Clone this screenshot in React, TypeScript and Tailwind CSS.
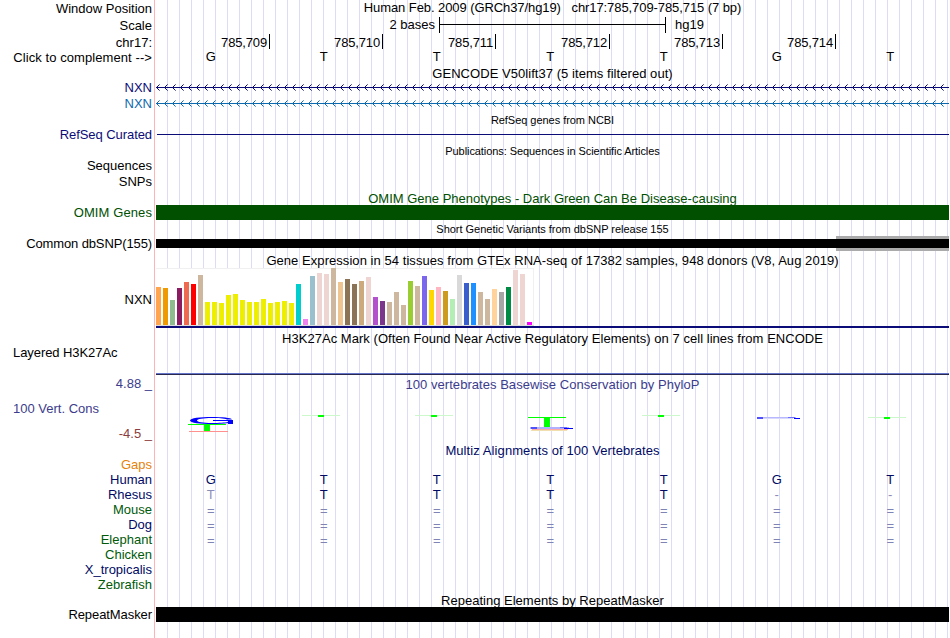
import React from "react";
import clsx from "clsx";

const labels = [
  { text: "Window Position", className: "mt-px" },
  { text: "Scale", className: "mt-0.5" },
  { text: "chr17:", className: "mt-0.5" },
  { text: "Click to complement -->", className: "tracking-[0.08px]" },
  { text: "NXN", className: "mt-[15px] text-[#0c0c78]" },
  { text: "NXN", className: "mt-px text-[#0e6aae]" },
  {
    text: "RefSeq Curated",
    className: "mt-4 tracking-[-0.07px] text-[#0c0c78]",
  },
  { text: "Sequences", className: "mt-4" },
  { text: "SNPs", className: "mt-px" },
  { text: "OMIM Genes", className: "mt-4 tracking-[0.1px] text-[#005000]" },
  { text: "Common dbSNP(155)", className: "mt-4 tracking-[-0.12px]" },
  { text: "NXN", className: "mt-[41px]" },
  {
    text: "Layered H3K27Ac",
    className: "mt-[38px] self-start ml-[13px] tracking-[-0.07px]",
  },
  { text: "4.88 _", className: "mt-4 text-[#3c3c8c]" },
  {
    text: "100 Vert. Cons",
    className: "mt-2.5 self-start ml-[13px] text-[#3c3c8c]",
  },
  { text: "-4.5 _", className: "mt-2.5 text-[#8c3c3c]" },
  { text: "Gaps", className: "mt-4 text-[#e6820a]" },
  { text: "Human", className: "text-[#000a64]" },
  { text: "Rhesus", className: "text-[#000a64]" },
  { text: "Mouse", className: "text-[#005a0a]" },
  { text: "Dog", className: "text-[#000a64]" },
  { text: "Elephant", className: "text-[#005a0a]" },
  { text: "Chicken", className: "text-[#005a0a]" },
  { text: "X_tropicalis", className: "text-[#000a64]" },
  { text: "Zebrafish", className: "text-[#005a0a]" },
  { text: "RepeatMasker", className: "mt-[15px] tracking-[-0.08px]" },
];

const positions = [
  "785,709",
  "785,710",
  "785,711",
  "785,712",
  "785,713",
  "785,714",
];

const alignments = ["GTTTTGT", "TTTTT--", "=======", "=======", "======="];

// [height, color] for each GTEx tissue
const tissues: [number, string][] = [
  [38, "#ffa54f"],
  [37, "#ee9a00"],
  [25, "#8fbc8f"],
  [37, "#8b1c62"],
  [43, "#ee6a50"],
  [41, "#ff0000"],
  [50, "#cdb79e"],
  [23, "#eeee00"],
  [23, "#eeee00"],
  [22, "#eeee00"],
  [30, "#eeee00"],
  [31, "#eeee00"],
  [25, "#eeee00"],
  [23, "#eeee00"],
  [23, "#eeee00"],
  [26, "#eeee00"],
  [22, "#eeee00"],
  [23, "#eeee00"],
  [24, "#eeee00"],
  [22, "#eeee00"],
  [41, "#00cdcd"],
  [6, "#ee82ee"],
  [49, "#9ac0cd"],
  [52, "#eed5d2"],
  [51, "#eed5d2"],
  [57, "#cdb79e"],
  [43, "#eec591"],
  [46, "#8b7355"],
  [41, "#8b7355"],
  [44, "#cdaa7d"],
  [48, "#eed5d2"],
  [28, "#b452cd"],
  [24, "#7a378b"],
  [23, "#cdb79e"],
  [33, "#cdb79e"],
  [20, "#cdb79e"],
  [44, "#9acd32"],
  [39, "#cdb79e"],
  [49, "#7a67ee"],
  [35, "#ffd700"],
  [38, "#ffb6c1"],
  [34, "#cd9b1d"],
  [26, "#b4eeb4"],
  [50, "#d9d9d9"],
  [42, "#3a5fcd"],
  [42, "#1e90ff"],
  [33, "#cdb79e"],
  [26, "#cdb79e"],
  [36, "#ffd39b"],
  [33, "#a6a6a6"],
  [38, "#008b45"],
  [55, "#eed5d2"],
  [51, "#eed5d2"],
  [3, "#ff00ff"],
];

const columns =
  "grid grid-cols-[113px_113px_113px_114px_113px_113px_114px]";

function Title({
  children,
  small,
  className,
}: {
  children: React.ReactNode;
  small?: boolean;
  className?: string;
}) {
  return (
    <div
      className={clsx(
        "text-center whitespace-pre",
        small ? "text-[11px] leading-[12px]" : "leading-[15px]",
        className
      )}
    >
      {children}
    </div>
  );
}

function GeneLine({ color, className }: { color: string; className: string }) {
  const arrows = Array.from({ length: 99 }, (_, i) => 1 + i * 8);
  return (
    <svg
      width="793"
      height="7"
      shapeRendering="crispEdges"
      fill={color}
      className={clsx("block", className)}
    >
      <rect x="0" y="3" width="793" height="1" />
      {arrows.map((x) => (
        <g key={x}>
          <path
            d={`M${x} 2h1v1h-1zM${x} 4h1v1h-1zM${x + 1} 1h1v1h-1zM${
              x + 1
            } 5h1v1h-1z`}
          />
          <path
            d={`M${x + 2} 0h1v1h-1zM${x + 2} 6h1v1h-1z`}
            fillOpacity="0.6"
          />
        </g>
      ))}
    </svg>
  );
}

function Bases({ row, className }: { row: string; className?: string }) {
  return (
    <div className={clsx(columns, "leading-[15px]", className)}>
      {row.split("").map((base, i) => (
        <span key={i} className="pr-[3.5px] text-center">
          {base}
        </span>
      ))}
    </div>
  );
}

function Conservation() {
  return (
    <svg width="793" height="17" className="mt-[23px] block">
      {/* G over T */}
      <path
        d="M34 5.5C34 3 44 2 56 2C66 2 75 2.8 76 4.4L71 4.4C68 3.4 62 3 56 3C47 3 41 4 41 5.5C41 7 47 8 56 8C63 8 69 7.6 72 7L72 8C68 8.8 62 9 56 9C44 9 34 8 34 5.5z"
        fill="#0000ff"
      />
      <path d="M57 5h20v4h-5v-3h-15z" fill="#0000ff" />
      <rect x="32" y="9" width="38" height="1" fill="#00ff00" />
      <rect x="48" y="9" width="6" height="7" fill="#00ff00" />
      <rect x="33" y="16" width="39" height="1" fill="#ff9090" />
      {/* faint T */}
      {[146, 259, 486].map((x) => (
        <g key={x}>
          <rect x={x} y="0" width="38" height="1" fill="#ccf8cc" />
          <rect x={x + 16} y="0" width="6" height="2" fill="#00ff00" />
        </g>
      ))}
      {/* T over squashed letters */}
      <rect x="372" y="2" width="38" height="1" fill="#00ff00" />
      <rect x="388" y="2" width="6" height="10" fill="#00ff00" />
      <rect x="374" y="12" width="39" height="2" fill="#b0b0ff" />
      <rect x="375" y="12" width="6" height="2" fill="#5050ff" />
      <rect x="404" y="12" width="7" height="1" fill="#7070ff" />
      <rect x="408" y="13" width="9" height="1" fill="#0000ff" />
      <rect x="376" y="14" width="36" height="1" fill="#ffa8a8" />
      <rect x="375" y="15" width="36" height="1" fill="#f0e0b0" />
      {/* flat G */}
      <rect x="601" y="2" width="39" height="1" fill="#b8b8ff" />
      <rect x="603" y="3" width="34" height="1" fill="#d8d8ff" />
      <rect x="601" y="2" width="6" height="2" fill="#5050ff" />
      <rect x="632" y="2" width="7" height="1" fill="#7070ff" />
      <rect x="638" y="3" width="6" height="1" fill="#0000ff" />
      <rect x="712" y="2" width="38" height="1" fill="#ccf8cc" />
      <rect x="728" y="2" width="6" height="2" fill="#00ff00" />
    </svg>
  );
}

function App() {
  return (
    <div className="flex h-[638px] w-[949px] overflow-hidden bg-white font-['Liberation_Sans',Arial,sans-serif] text-[13px] text-black">
      <div className="flex w-[155px] shrink-0 flex-col items-end border-r border-[#ffb4b4] pr-0.5">
        {labels.map((label, i) => (
          <div
            key={i}
            className={clsx("leading-[15px] whitespace-pre", label.className)}
          >
            {label.text}
          </div>
        ))}
      </div>

      <div className="ml-px w-[793px] shrink-0 bg-[repeating-linear-gradient(to_right,transparent_0,transparent_11px,#dcdcf8_11px,#dcdcf8_12px)]">
        <Title className="tracking-[-0.08px]">
          Human Feb. 2009 (GRCh37/hg19)   chr17:785,709-785,715 (7 bp)
        </Title>
        <div className="mt-0.5 flex h-4 leading-[15px]">
          <span className="w-[279px] text-right">2 bases</span>
          <div className="ml-1 flex h-4 w-[227px] border-x border-black">
            <div className="mt-[7px] h-px w-full bg-black" />
          </div>
          <span className="ml-[9px]">hg19</span>
        </div>
        <div className={clsx(columns, "mt-px h-[15px]")}>
          {positions.map((pos, i) => (
            <div
              key={pos}
              className={clsx(
                "h-[15px] pt-px pr-0.5 text-right leading-[15px] tracking-[-0.15px]",
                i > 0 && "border-l border-black"
              )}
            >
              {pos}
            </div>
          ))}
          <div className="border-l border-black" />
        </div>
        <Bases row="GTTTTGT" />

        <Title className="mt-0.5 tracking-[0.05px]">
          GENCODE V50lift37 (5 items filtered out)
        </Title>
        <GeneLine color="#0c0c78" className="mt-[3px]" />
        <GeneLine color="#0e6aae" className="mt-[9px]" />

        <Title small className="mt-[7px] tracking-[-0.04px]">
          RefSeq genes from NCBI
        </Title>
        <div className="mt-2 ml-px h-px bg-[#0c0c78]" />

        <Title small className="mt-2.5 tracking-[-0.07px]">
          Publications: Sequences in Scientific Articles
        </Title>

        <Title className="mt-[34px] text-[#005000]">
          OMIM Gene Phenotypes - Dark Green Can Be Disease-causing
        </Title>
        <div className="-mt-px h-[15px] bg-[#005000]" />

        <Title small className="mt-[3px] tracking-[-0.02px]">
          Short Genetic Variants from dbSNP release 155
        </Title>
        <div className="mt-px flex h-[15px] items-center">
          <div className="h-[9px] w-[680px] bg-black" />
          <div className="h-[15px] flex-1 border-y-[3px] border-[#aaaaaa] bg-black" />
        </div>

        <Title className="mt-0.5 tracking-[0.055px]">
          Gene Expression in 54 tissues from GTEx RNA-seq of 17382 samples, 948
          donors (V8, Aug 2019)
        </Title>
        <div className="flex h-[58px] w-[378px] items-end gap-0.5 border-b border-[#dcdcdc] bg-white shadow-[inset_-1px_1px_0_#f0f0f0]">
          {tissues.map(([height, color], i) => (
            <div
              key={i}
              className="w-[5px] shrink-0"
              style={{ height, backgroundColor: color }}
            />
          ))}
        </div>
        <div className="h-0.5 bg-[#0c0c78]" />

        <Title className="mt-[3px] tracking-[0.04px]">
          H3K27Ac Mark (Often Found Near Active Regulatory Elements) on 7 cell
          lines from ENCODE
        </Title>
        <div className="mt-[27px] h-0.5 border-t border-[#6474c8] bg-[#282850]" />

        <Title className="mt-0.5 tracking-[0.04px] text-[#3c3c8c]">
          100 vertebrates Basewise Conservation by PhyloP
        </Title>
        <Conservation />

        <Title className="mt-[11px] tracking-[0.09px] text-[#000a64]">
          Multiz Alignments of 100 Vertebrates
        </Title>
        <div className="mt-3.5 text-[#000a64]">
          {alignments.map((row, i) => (
            <Bases
              key={i}
              row={row}
              className={clsx(
                i === 1 && "[&>*:first-child]:text-[#8c8cb8] [&>*:nth-child(n+6)]:text-[#8c8cb8]",
                i > 1 && "relative top-px text-[#8084b4]"
              )}
            />
          ))}
        </div>

        <Title className="mt-[46px] tracking-[0.01px]">
          Repeating Elements by RepeatMasker
        </Title>
        <div className="-mt-px h-[15px] bg-black" />
      </div>
    </div>
  );
}

export default App;
